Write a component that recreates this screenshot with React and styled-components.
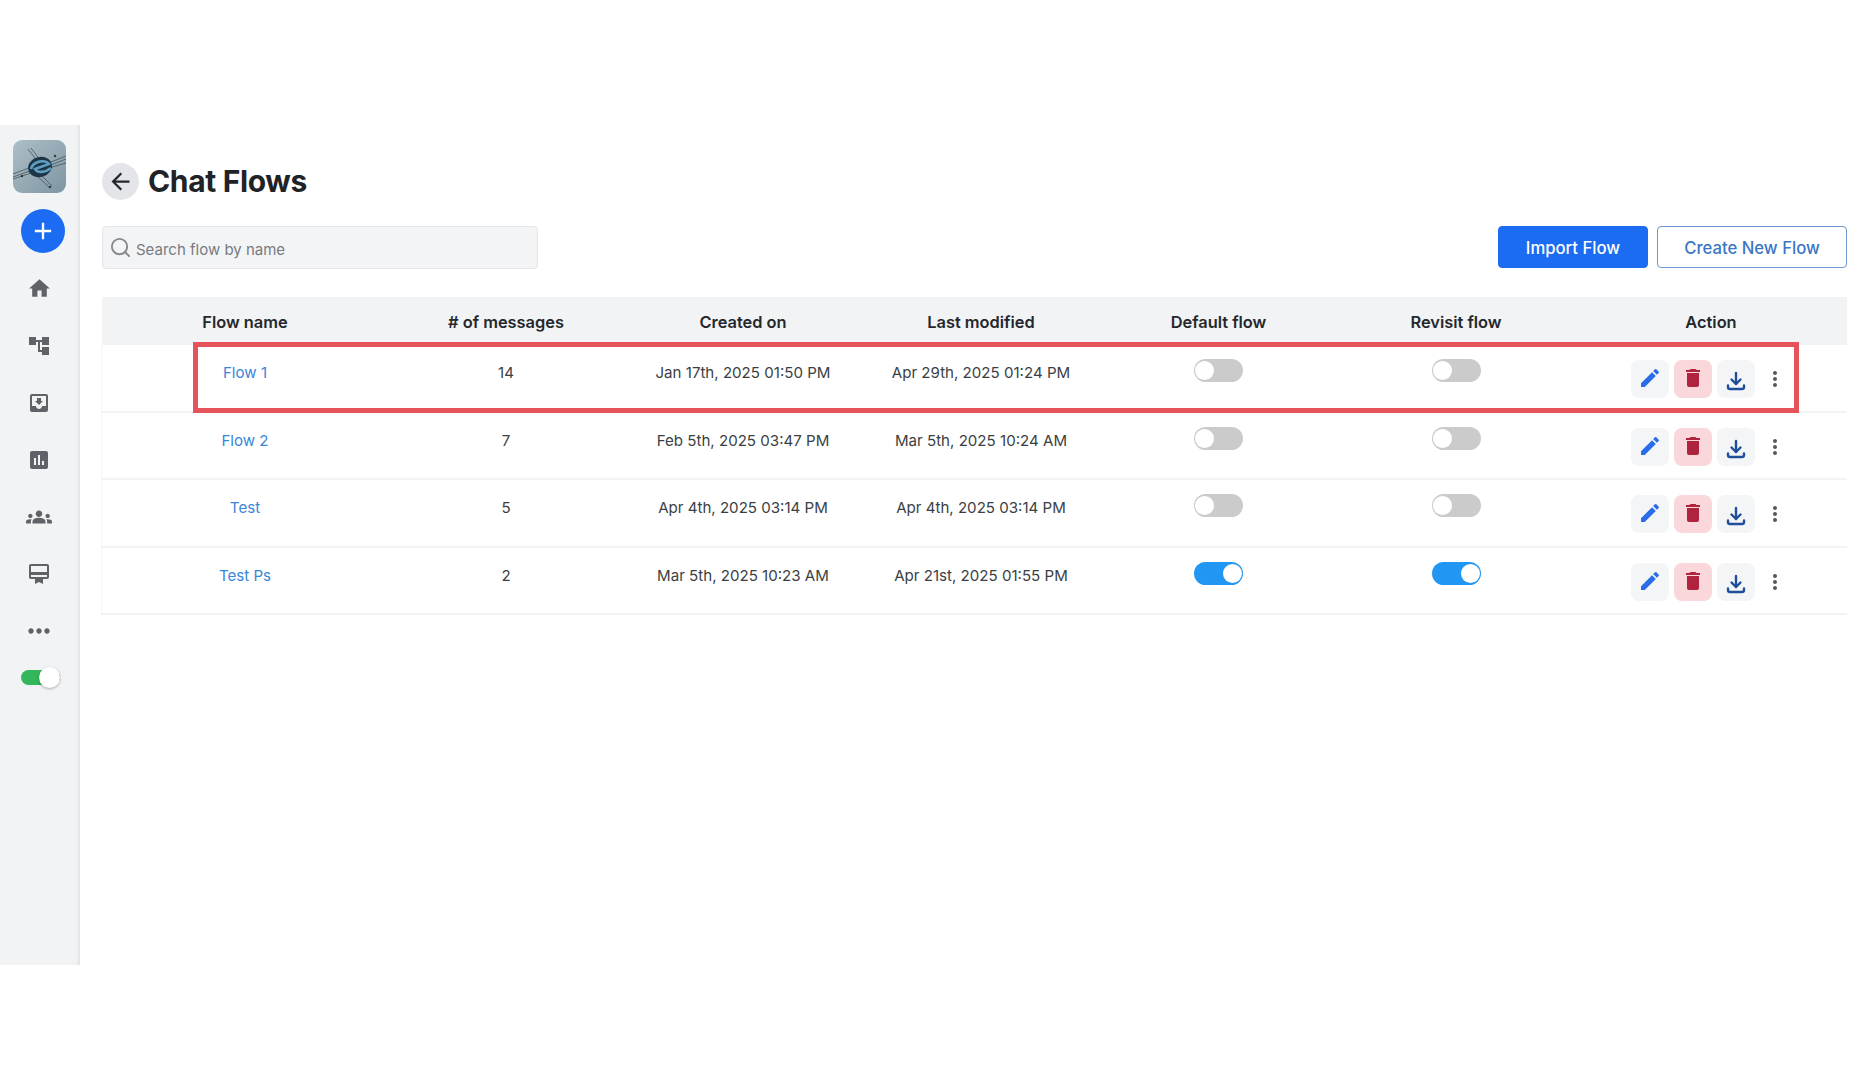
import React from "react";
import styled, { createGlobalStyle } from "styled-components";
import {
  MdHome, MdAccountTree, MdMoveToInbox, MdAssessment, MdGroups, MdCardMembership,
  MdMoreHoriz, MdArrowBack, MdEdit, MdDelete, MdMoreVert, MdAdd,
} from "react-icons/md";
import { Search } from "lucide-react";

const Global = createGlobalStyle`
  html, body { margin: 0; padding: 0; background: #fff; }
  body { font-family: Inter, "Noto Sans", "Liberation Sans", sans-serif; color: #24282d; }
  * { box-sizing: border-box; }
`;

const Page = styled.div`
  width: 1866px;
  height: 1080px;
  padding-top: 125px;
  overflow: hidden;
`;
const Shell = styled.div`
  display: flex;
  height: 840px;
`;
const Sidebar = styled.nav`
  width: 80px;
  flex: none;
  background: #f1f3f5;
  box-shadow: inset -4px 0 4px -3px rgba(0, 0, 0, 0.1);
  padding: 15px 0 0 13px;
  display: flex;
  flex-direction: column;
  align-items: flex-start;
`;
const Logo = styled.svg`
  width: 53px;
  height: 53px;
  border-radius: 9px;
  display: block;
`;
const AddButton = styled.button`
  width: 44px;
  height: 44px;
  margin: 16px 0 0 8px;
  border: 0;
  padding: 0;
  border-radius: 50%;
  background: #1b6cf2;
  color: #fff;
  font-size: 28px;
  display: flex;
  align-items: center;
  justify-content: center;
`;
const NavItem = styled.div`
  width: 52px;
  height: 57px;
  display: flex;
  align-items: center;
  justify-content: center;
  color: #5f6368;
  font-size: ${(p) => p.$size || 24}px;
`;
const NavList = styled.div`
  margin-top: 7px;
  display: flex;
  flex-direction: column;
`;
const Switch = styled.div`
  position: relative;
  width: 39px;
  height: 15px;
  margin: 11px 0 0 8px;
  border-radius: 8px;
  background: #34b75a;
`;
const SwitchKnob = styled.span`
  position: absolute;
  right: 0;
  top: -3px;
  width: 21px;
  height: 21px;
  border-radius: 50%;
  background: #fff;
  box-shadow: 0 1px 3px rgba(0, 0, 0, 0.3);
`;

const Main = styled.main`
  flex: 1;
  min-width: 0;
  padding: 37px 19px 0 22px;
`;
const TitleRow = styled.div`
  display: flex;
  align-items: center;
  gap: 9px;
  height: 38px;
`;
const BackButton = styled.button`
  width: 37px;
  height: 37px;
  border: 0;
  padding: 0;
  border-radius: 50%;
  background: #e4e5e8;
  color: #24282d;
  font-size: 27px;
  display: flex;
  align-items: center;
  justify-content: center;
`;
const Title = styled.h1`
  margin: 0;
  font-size: 30px;
  font-weight: 700;
  letter-spacing: -0.35px;
  color: #1f2328;
`;
const Toolbar = styled.div`
  margin-top: 26px;
  display: flex;
  align-items: flex-start;
  justify-content: space-between;
`;
const SearchBox = styled.div`
  width: 436px;
  height: 43px;
  padding: 3px 0 0 6px;
  display: flex;
  align-items: center;
  gap: 4px;
  background: #f3f4f6;
  border: 1px solid #e3e5e8;
  border-radius: 4px;
  color: #777b80;
  font-size: 15px;
`;
const SearchGlyph = styled(Search)`
  width: 23px;
  height: 23px;
  margin-top: -4px;
  color: #85888c;
`;
const Buttons = styled.div`
  display: flex;
  gap: 9px;
`;
const Button = styled.button`
  width: ${(p) => p.$width}px;
  height: 42px;
  padding: 2px 0 0;
  border-radius: 4px;
  border: 1px solid ${(p) => (p.$primary ? "#1b6cf2" : "#6d97cc")};
  background: ${(p) => (p.$primary ? "#1b6cf2" : "#fff")};
  color: ${(p) => (p.$primary ? "#fff" : "#3a76c4")};
  font-family: inherit;
  font-size: 16.7px;
  font-weight: 500;
`;
const Table = styled.div`
  position: relative;
  margin-top: 28px;
`;
const columns = "286px 236px 238px 238px 237px 238px 1fr";
const HeadRow = styled.div`
  display: grid;
  grid-template-columns: ${columns};
  height: 48px;
  padding-top: 1px;
  align-items: center;
  background: #f2f3f5;
  font-size: 16.4px;
  font-weight: 600;
  color: #24282d;
  text-align: center;
`;
const Row = styled.div`
  display: grid;
  grid-template-columns: ${columns};
  height: ${(p) => (p.$tall ? 68 : 67)}px;
  border-bottom: 2px solid #f2f3f5;
  border-left: 1px solid #f4f5f6;
  margin-left: -1px;
  font-size: 15.1px;
  color: #3b3f44;
  text-align: center;
`;
const Cell = styled.div`
  padding-top: 18px;
  line-height: 20px;
`;
const FlowLink = styled.a`
  color: #3a86d8;
`;
const ToggleCell = styled.div`
  padding-top: 14px;
  display: flex;
  justify-content: center;
`;
const Toggle = styled.div`
  position: relative;
  width: 49px;
  height: 23px;
  border-radius: 12px;
  background: ${(p) => (p.$on ? "#2196f3" : "#cbcbcb")};
`;
const Knob = styled.span`
  position: absolute;
  top: 2px;
  left: ${(p) => (p.$on ? "29px" : "1px")};
  width: 19px;
  height: 19px;
  border-radius: 50%;
  background: #fff;
`;
const Actions = styled.div`
  padding: 15px 0 0 56px;
  display: flex;
  align-items: flex-start;
  gap: 5px;
`;
const IconButton = styled.button`
  width: 38px;
  height: 38px;
  border: 0;
  padding: ${(p) => (p.$raised ? "0 0 3px" : "3px 0 0")};
  border-radius: 8px;
  background: ${(p) => p.$bg};
  color: ${(p) => p.$color};
  font-size: 24px;
  display: flex;
  align-items: center;
  justify-content: center;
`;
const MoreButton = styled.div`
  width: 24px;
  height: 38px;
  margin-left: 3px;
  display: flex;
  align-items: center;
  justify-content: center;
  color: #55595e;
  font-size: 24px;
`;
const Highlight = styled.div`
  position: absolute;
  left: 91px;
  top: 45px;
  width: 1606px;
  height: 71px;
  border: 5px solid #e5545a;
  pointer-events: none;
`;

const LogoMark = () => (
  <Logo viewBox="0 0 53 53">
    <defs>
      <linearGradient id="logoBg" x1="0" y1="0" x2="1" y2="1">
        <stop offset="0" stopColor="#aebfc8" />
        <stop offset="1" stopColor="#7d96a2" />
      </linearGradient>
    </defs>
    <rect width="53" height="53" fill="url(#logoBg)" />
    <g stroke="#46535c" strokeWidth="0.8" fill="none">
      <path d="M0 34 L21 26 M0 37 L22 29 M0 39 L18 33" />
      <path d="M33 24 L53 16 M33 27 L53 19 M36 28 L53 23" />
      <path d="M15 9 L25 22 M18 8 L27 20 M22 34 L37 48 M26 33 L39 46" />
    </g>
    <ellipse cx="27" cy="27" rx="12" ry="10" fill="#1c3547" transform="rotate(-14 27 27)" />
    <path d="M18 29 C20 21 32 19 36 24 L22 29 C24 33 32 33 38 28" fill="none" stroke="#5f9dc2" strokeWidth="2.6" />
    <g fill="#2e3a42">
      <circle cx="42" cy="16" r="1.2" />
      <circle cx="9" cy="36" r="1.2" />
      <circle cx="37" cy="47" r="1.2" />
    </g>
  </Logo>
);

const DownloadIcon = () => (
  <svg width="22" height="22" viewBox="0 0 22 22" fill="none" stroke="currentColor" strokeWidth="2.4" strokeLinecap="round" strokeLinejoin="round">
    <path d="M11 3v11" />
    <path d="M6.5 9.5 11 14l4.5-4.5" />
    <path d="M3 15.5v1.5a2 2 0 0 0 2 2h12a2 2 0 0 0 2-2v-1.5" />
  </svg>
);

const flows = [
  { name: "Flow 1", messages: 14, created: "Jan 17th, 2025 01:50 PM", modified: "Apr 29th, 2025 01:24 PM", on: false, tall: true },
  { name: "Flow 2", messages: 7, created: "Feb 5th, 2025 03:47 PM", modified: "Mar 5th, 2025 10:24 AM", on: false, tall: false },
  { name: "Test", messages: 5, created: "Apr 4th, 2025 03:14 PM", modified: "Apr 4th, 2025 03:14 PM", on: false, tall: true },
  { name: "Test Ps", messages: 2, created: "Mar 5th, 2025 10:23 AM", modified: "Apr 21st, 2025 01:55 PM", on: true, tall: false },
];

const heads = ["Flow name", "# of messages", "Created on", "Last modified", "Default flow", "Revisit flow", "Action"];

const FlowToggle = ({ on }) => (
  <ToggleCell>
    <Toggle $on={on}>
      <Knob $on={on} />
    </Toggle>
  </ToggleCell>
);

export default function App() {
  return (
    <Page>
      <Global />
      <Shell>
        <Sidebar>
          <LogoMark />
          <AddButton><MdAdd /></AddButton>
          <NavList>
            <NavItem $size={25}><MdHome /></NavItem>
            <NavItem><MdAccountTree /></NavItem>
            <NavItem><MdMoveToInbox /></NavItem>
            <NavItem><MdAssessment /></NavItem>
            <NavItem $size={26}><MdGroups /></NavItem>
            <NavItem><MdCardMembership /></NavItem>
            <NavItem $size={32}><MdMoreHoriz /></NavItem>
          </NavList>
          <Switch><SwitchKnob /></Switch>
        </Sidebar>
        <Main>
          <TitleRow>
            <BackButton><MdArrowBack /></BackButton>
            <Title>Chat Flows</Title>
          </TitleRow>
          <Toolbar>
            <SearchBox>
              <SearchGlyph strokeWidth={2} />
              Search flow by name
            </SearchBox>
            <Buttons>
              <Button $primary $width={150}>Import Flow</Button>
              <Button $width={190}>Create New Flow</Button>
            </Buttons>
          </Toolbar>
          <Table>
            <HeadRow>
              {heads.map((h) => <div key={h}>{h}</div>)}
            </HeadRow>
            {flows.map((f) => (
              <Row key={f.name} $tall={f.tall}>
                <Cell><FlowLink>{f.name}</FlowLink></Cell>
                <Cell>{f.messages}</Cell>
                <Cell>{f.created}</Cell>
                <Cell>{f.modified}</Cell>
                <FlowToggle on={f.on} />
                <FlowToggle on={f.on} />
                <Actions>
                  <IconButton $raised $bg="#f3f5f7" $color="#2b6de8"><MdEdit /></IconButton>
                  <IconButton $raised $bg="#f9d7da" $color="#b0233f"><MdDelete /></IconButton>
                  <IconButton $bg="#f3f5f7" $color="#1f4e9a"><DownloadIcon /></IconButton>
                  <MoreButton><MdMoreVert /></MoreButton>
                </Actions>
              </Row>
            ))}
            <Highlight />
          </Table>
        </Main>
      </Shell>
    </Page>
  );
}
